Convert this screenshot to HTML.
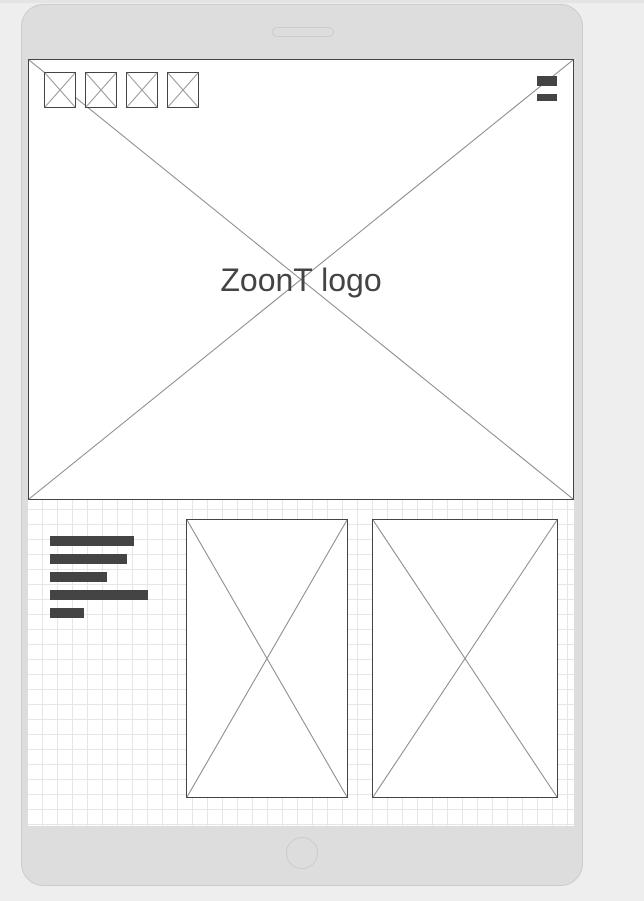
<!DOCTYPE html>
<html><head><style>
html,body{margin:0;padding:0;background:#eee;width:644px;height:901px;overflow:hidden}
</style></head><body>
<svg width="644" height="901" xmlns="http://www.w3.org/2000/svg" style="display:block">
<defs>
<pattern id="g" x="27" y="494" width="15" height="15" patternUnits="userSpaceOnUse">
<path d="M0.5 0V15M0 0.5H15" stroke="#e6e6e6" stroke-width="1" fill="none"/>
</pattern>
</defs>
<rect x="0" y="0" width="644" height="3" fill="#e4e4e4"/>
<rect x="21.5" y="4.5" width="561" height="881" rx="22" fill="#ddd" stroke="#ccc"/>
<rect x="272.5" y="27.5" width="61" height="9" rx="4.5" fill="#ddd" stroke="#ccc"/>
<circle cx="302" cy="853" r="15.5" fill="#ddd" stroke="#ccc"/>
<rect x="28" y="500" width="546" height="326" fill="#fff"/>
<rect x="28" y="500" width="546" height="326" fill="url(#g)"/>
<rect x="28.5" y="59.5" width="545" height="440" fill="#fff" stroke="#444"/>
<g stroke="#888" stroke-width="1">
<line x1="29" y1="60" x2="573" y2="499"/><line x1="573" y1="60" x2="29" y2="499"/>
</g>
<g fill="#fff" stroke="#444">
<rect x="44.5" y="72.5" width="31" height="35"/>
<rect x="85.5" y="72.5" width="31" height="35"/>
<rect x="126.5" y="72.5" width="31" height="35"/>
<rect x="167.5" y="72.5" width="31" height="35"/>
</g>
<g stroke="#999">
<path d="M45 73L75 107M75 73L45 107"/>
<path d="M86 73L116 107M116 73L86 107"/>
<path d="M127 73L157 107M157 73L127 107"/>
<path d="M168 73L198 107M198 73L168 107"/>
</g>
<rect x="537" y="76" width="20" height="10" fill="#444"/>
<rect x="537" y="94" width="20" height="7" fill="#444"/>
<text x="301" y="291" text-anchor="middle" font-family="Liberation Sans, sans-serif" font-size="32" fill="#444">ZoonT logo</text>
<g fill="#444">
<rect x="50" y="536" width="84" height="10"/>
<rect x="50" y="554" width="77" height="10"/>
<rect x="50" y="572" width="57" height="10"/>
<rect x="50" y="590" width="98" height="10"/>
<rect x="50" y="608" width="34" height="10"/>
</g>
<rect x="186.5" y="519.5" width="161" height="278" fill="#fff" stroke="#444"/>
<rect x="372.5" y="519.5" width="185" height="278" fill="#fff" stroke="#444"/>
<g stroke="#888">
<path d="M187 520L347 797M347 520L187 797"/>
<path d="M373 520L557 797M557 520L373 797"/>
</g>
</svg>
</body></html>
